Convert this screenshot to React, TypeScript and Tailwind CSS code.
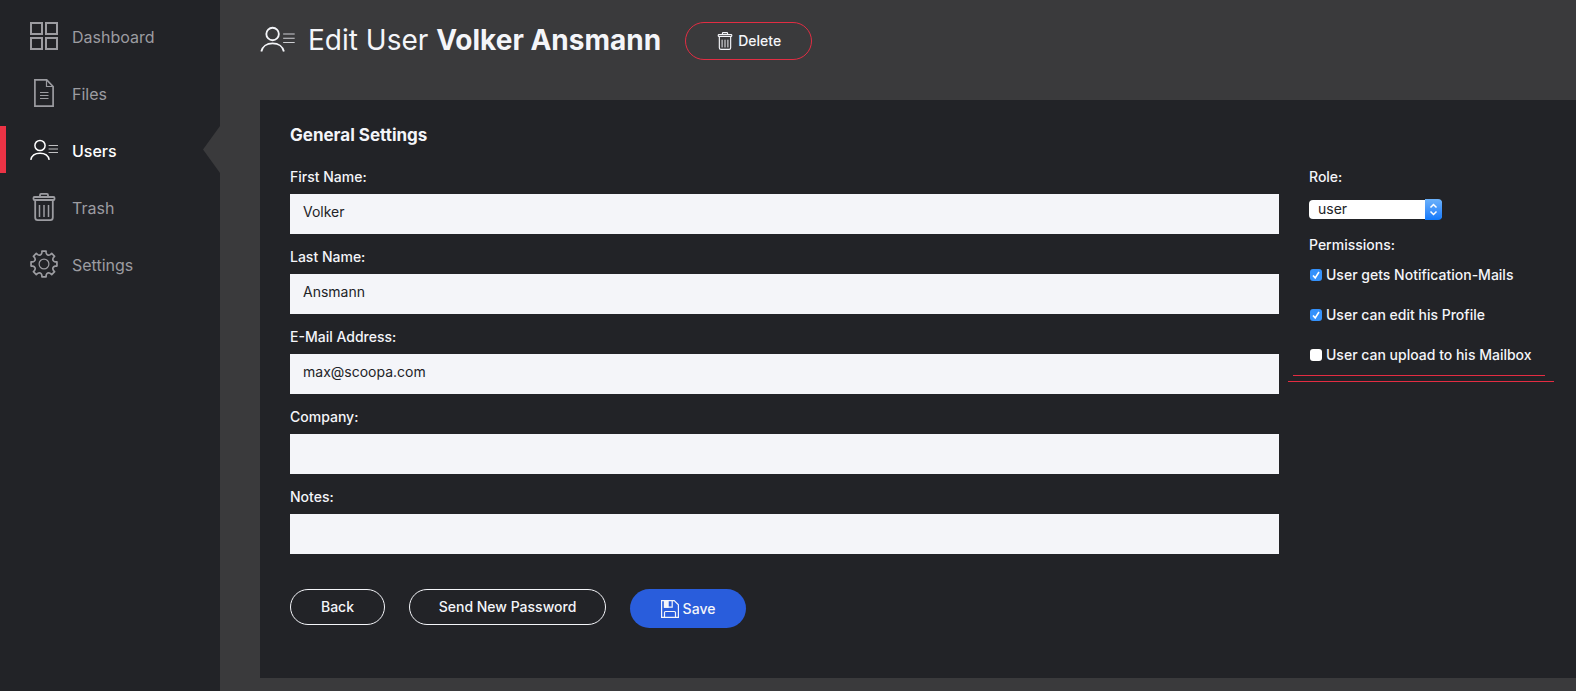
import React, { useState } from "react";

type IconProps = { className?: string };

function DashboardIcon({ className }: IconProps) {
  return (
    <svg viewBox="0 0 28 28" className={className} fill="none" stroke="currentColor" strokeWidth="2" aria-hidden="true">
      <rect x="1" y="1" width="11" height="11" />
      <rect x="16" y="1" width="11" height="11" />
      <rect x="1" y="16" width="11" height="11" />
      <rect x="16" y="16" width="11" height="11" />
    </svg>
  );
}

function FileIcon({ className }: IconProps) {
  return (
    <svg viewBox="0 0 28 28" className={className} fill="none" stroke="currentColor" strokeWidth="1.7" aria-hidden="true">
      <path d="M4.9 0.9h11.8l6.400 6.600v19.600H4.900z" />
      <path d="M16.500 1v6.500h6.500" strokeWidth="1.200" />
      <path d="M10 13.500h8.500M10 16.500h8.500M10 19.500h8.500" strokeWidth="1" />
    </svg>
  );
}

function UsersIcon({ className }: IconProps) {
  return (
    <svg viewBox="0 0 28 22" className={className} fill="none" stroke="currentColor" strokeWidth="1.5" aria-hidden="true">
      <circle cx="10" cy="6.500" r="5.100" />
      <path d="M0.800 20.800C1.600 16.800 5.200 14.200 10 14.200s8.400 2.600 9.200 6.600" />
      <path d="M18.600 6.500H28M18.600 10H28M18.600 13.500H28" strokeWidth="0.900" opacity="0.800" />
    </svg>
  );
}

function TrashIcon({ className }: IconProps) {
  return (
    <svg viewBox="0 0 28 28" className={className} fill="none" stroke="currentColor" strokeWidth="1.800" aria-hidden="true">
      <path d="M10 3.800V2c0-.7.400-1.100 1.100-1.100h5.800c.7 0 1.100.4 1.100 1.100v1.800" />
      <rect x="3.500" y="4" width="21" height="3" rx="1" />
      <path d="M5.200 7v17.500c0 1.600.9 2.600 2.500 2.600h12.600c1.600 0 2.500-1 2.500-2.600V7" />
      <path d="M9.500 12v12M14 12v12M18.500 12v12" strokeWidth="1.500" />
    </svg>
  );
}

function polar(radius: number, degrees: number) {
  const rad = (degrees * Math.PI) / 180;
  return (14 + radius * Math.sin(rad)).toFixed(2) + " " + (14 - radius * Math.cos(rad)).toFixed(2);
}

const gearPath =
  Array.from({ length: 8 }, (_, i) => {
    const a = i * 45;
    return [
      (i === 0 ? "M" : "L") + polar(11.3, a - 11),
      "L" + polar(13.1, a - 9),
      "L" + polar(13.1, a + 9),
      "L" + polar(11.3, a + 11),
      "C" + polar(9.3, a + 17) + " " + polar(9.3, a + 28) + " " + polar(11.3, a + 34),
    ].join("");
  }).join("") + "Z";

function SettingsIcon({ className }: IconProps) {
  return (
    <svg viewBox="0 0 28 28" className={className} fill="none" stroke="currentColor" strokeLinejoin="round" aria-hidden="true">
      <path strokeWidth="1.700" d={gearPath} />
      <circle cx="14" cy="14" r="4.900" strokeWidth="1.200" />
    </svg>
  );
}

function SaveIcon({ className }: IconProps) {
  return (
    <svg viewBox="0 0 18 18" className={className} fill="none" stroke="currentColor" strokeWidth="1.200" aria-hidden="true">
      <path d="M.6.6h12.600l4.200 4.200v12.600H.6z" />
      <path d="M3.500 17.400v-4.900q0-1 1-1h9q1 0 1 1v4.900" />
      <path d="M3.500.6v6.600h7.700V.6" />
      <path d="M3.500.6h3.600v6.600H3.500z" fill="currentColor" />
    </svg>
  );
}

const navItems = [
  { label: "Dashboard", Icon: DashboardIcon, size: "h-7 w-7" },
  { label: "Files", Icon: FileIcon, size: "h-7 w-7" },
  { label: "Users", Icon: UsersIcon, size: "h-[22px] w-7" },
  { label: "Trash", Icon: TrashIcon, size: "h-7 w-7" },
  { label: "Settings", Icon: SettingsIcon, size: "h-7 w-7" },
];

function Sidebar() {
  return (
    <nav className="w-[220px] shrink-0 bg-[#222327] pt-3">
      <ul className="flex flex-col gap-[10px]">
        {navItems.map(({ label, Icon, size }) => {
          const active = label === "Users";
          return (
            <li key={label} className="relative">
              <a
                href={"#" + label.toLowerCase()}
                aria-current={active ? "page" : undefined}
                className={
                  active
                    ? "flex h-[47px] items-center gap-[14px] border-l-6 border-[#ec3345] pl-6 font-medium text-white"
                    : "flex h-[47px] items-center gap-[14px] pl-[30px] text-[#9c9ca1]"
                }
              >
                <Icon className={size} />
                <span className="pt-[2px]">{label}</span>
              </a>
              {active && (
                <svg viewBox="0 0 17 47" className="absolute top-0 right-0 h-[47px] w-[17px]" aria-hidden="true">
                  <path d="M17 0v47L0 23.500z" fill="#3a3a3c" />
                </svg>
              )}
            </li>
          );
        })}
      </ul>
    </nav>
  );
}

function Field({ id, label, value, type = "text" }: { id: string; label: string; value: string; type?: string }) {
  return (
    <div>
      <label htmlFor={id} className="flex h-10 items-center pt-[6px] font-medium">
        {label}
      </label>
      <input
        id={id}
        type={type}
        defaultValue={value}
        className="block h-10 w-full bg-[#f4f5f9] px-[13px] pb-[6px] text-[#222327] outline-none"
      />
    </div>
  );
}

function Permission({ label, initial }: { label: string; initial: boolean }) {
  const [checked, setChecked] = useState(initial);
  return (
    <label className="flex h-10 items-center gap-1 pl-px font-medium whitespace-nowrap">
      <span className="grid h-3 w-3 shrink-0">
        <input
          type="checkbox"
          checked={checked}
          onChange={(e) => setChecked(e.target.checked)}
          className="col-start-1 row-start-1 h-3 w-3 appearance-none rounded-[3px] bg-white checked:bg-[#3491fb]"
        />
        {checked && (
          <svg viewBox="0 0 12 12" className="pointer-events-none col-start-1 row-start-1 h-3 w-3" fill="none" stroke="#fff" strokeWidth="1.600" aria-hidden="true">
            <path d="M3 6.500l2.200 2.400L9 3" />
          </svg>
        )}
      </span>
      {label}
    </label>
  );
}

export default function App() {
  return (
    <div className="flex min-h-screen bg-[#3a3a3c] font-['Inter',sans-serif] text-base text-[#f4f5f9]">
      <Sidebar />
      <main className="min-w-0 flex-1 pb-[13px] pl-10">
        <header className="flex h-[100px] items-start pt-[22px]">
          <UsersIcon className="mt-1 h-[27px] w-[35px]" />
          <h1 className="ml-[13px] text-[28px] leading-9 font-normal whitespace-nowrap">
            Edit User <strong className="font-bold">Volker Ansmann</strong>
          </h1>
          <button type="button" className="ml-6 flex h-[38px] w-[127px] items-center justify-center gap-1 rounded-full border border-[#e22d43] text-sm font-medium">
            <TrashIcon className="h-[18px] w-[18px]" />
            Delete
          </button>
        </header>

        <form className="bg-[#222327] pb-[50px] pl-[30px]" onSubmit={(e) => e.preventDefault()}>
          <h2 className="flex h-[54px] items-end pb-[6px] text-[17px] font-bold">General Settings</h2>
          <div className="flex text-sm">
            <div className="min-w-0 flex-1">
              <Field id="first-name" label="First Name:" value="Volker" />
              <Field id="last-name" label="Last Name:" value="Ansmann" />
              <Field id="email" type="email" label="E-Mail Address:" value="max@scoopa.com" />
              <Field id="company" label="Company:" value="" />
              <Field id="notes" label="Notes:" value="" />
            </div>
            <div className="relative ml-[30px] w-[267px] shrink-0">
              <label htmlFor="role" className="flex h-10 items-center pt-[6px] font-medium">
                Role:
              </label>
              <div className="relative mt-[5px] flex h-[21px] w-[133px] items-center">
                <select id="role" defaultValue="user" className="h-[19px] w-full appearance-none rounded-[4px] bg-white pb-[2px] pl-[9px] leading-4 text-[#222327] outline-none">
                  <option value="user">user</option>
                  <option value="admin">admin</option>
                </select>
                <span className="pointer-events-none absolute top-0 right-0 h-[21px] w-[17px] rounded-r-[4px] bg-linear-to-b from-[#6bb1fa] to-[#0b78fb]">
                  <svg viewBox="0 0 17 21" className="h-full w-full" fill="none" stroke="#fff" strokeWidth="1.500" aria-hidden="true">
                    <path d="M5.500 8.500l3-3 3 3M5.500 12.500l3 3 3-3" />
                  </svg>
                </span>
              </div>
              <p className="flex h-[35px] items-end font-medium">Permissions:</p>
              <Permission label="User gets Notification-Mails" initial={true} />
              <Permission label="User can edit his Profile" initial={true} />
              <Permission label="User can upload to his Mailbox" initial={false} />
              <svg viewBox="0 0 266 7" className="absolute top-[221px] -left-[21px] h-[7px] w-[266px]" aria-hidden="true">
                <path d="M5 0h252v1H5zM0 6h266v1H0z" fill="#e42c42" />
              </svg>
            </div>
          </div>
          <div className="mt-[35px] flex items-start gap-6 text-sm font-medium">
            <button type="button" className="h-9 w-[95px] rounded-full border border-[#f4f5f9]">
              Back
            </button>
            <button type="button" className="h-9 w-[197px] rounded-full border border-[#f4f5f9]">
              Send New Password
            </button>
            <button type="submit" className="flex h-[39px] w-[116px] items-center justify-center gap-1 rounded-full bg-[#295ddc]">
              <SaveIcon className="h-[18px] w-[18px]" />
              Save
            </button>
          </div>
        </form>
      </main>
    </div>
  );
}
